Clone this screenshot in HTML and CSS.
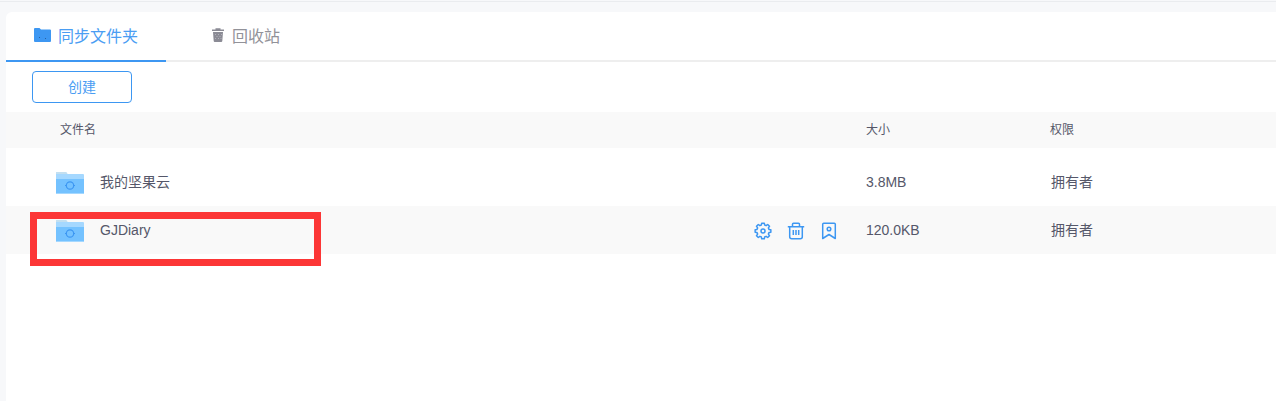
FILE: index.html
```html
<!DOCTYPE html>
<html lang="zh-CN">
<head>
<meta charset="utf-8">
<title>同步文件夹</title>
<link rel="stylesheet" href="styles.css">
</head>
<body>
<svg class="defs" aria-hidden="true">
  <symbol id="sync-folder" viewBox="0 0 28 22">
    <path d="M0 2V1Q0 0 1 0H10L11.500 2H27Q28 2 28 3V8H0Z" fill="#a5d8ff"/>
    <path d="M0 1Q0 0 1 0H10L11.500 2H0Z" fill="#c3dff0"/>
    <path d="M0 7H28V21Q28 22 27 22H1Q0 22 0 21Z" fill="#74c2ff"/>
    <path d="M0 21H28Q28 22 27 22H1Q0 22 0 21Z" fill="#a5d8ff"/>
    <circle cx="14" cy="13.500" r="3.700" fill="none" stroke="#3d97f2" stroke-width="1.200"/>
    <path d="M9 13.500h1.500M17.500 13.500h1.500" stroke="#3d97f2" stroke-width="1.200"/>
  </symbol>
</svg>
<main class="panel">
  <nav class="tabs">
    <a class="tab tab-active">
      <svg class="tab-folder" viewBox="0 0 17 14"><path d="M0 1Q0 0 1 0H5.500L7 1.500H16Q17 1.500 17 2.500V13Q17 14 16 14H1Q0 14 0 13Z" fill="#3d97f2"/><path d="M5 9h1v1H5zM11 10h1v1h-1z" fill="#2863a5"/></svg>
      <span>同步文件夹</span>
    </a>
    <a class="tab tab-trash">
      <svg class="tab-bin" viewBox="0 0 12 14"><path d="M0 1.500H3.500V.3H8.500V1.500H12V3H0ZM1 4H11L10.300 13Q10.200 14 9.300 14H2.700Q1.800 14 1.700 13Z" fill="#8b8b95"/><path d="M3 6h1v1H3zM6 6h1v1H6zM9 6h1v1H9zM4.500 8h1v1h-1zM7.500 8h1v1h-1zM3 10h1v1H3zM6 10h1v1H6zM8.500 10h1v1h-1z" fill="#b3b3bb"/></svg>
      <span>回收站</span>
    </a>
  </nav>
  <div class="toolbar"><button class="create">创建</button></div>
  <div class="row head"><span class="name">文件名</span><span class="size">大小</span><span class="role">权限</span></div>
  <div class="list">
    <div class="row file">
      <div class="name"><svg class="folder"><use href="#sync-folder"/></svg><span>我的坚果云</span></div>
      <span class="size">3.8MB</span><span class="role">拥有者</span>
    </div>
    <div class="row file selected">
      <div class="name"><svg class="folder"><use href="#sync-folder"/></svg><span>GJDiary</span>
        <div class="actions">
          <svg viewBox="-9 -9 18 18"><path d="M-1.600-6L-1.300-7.850H1.300L1.600-6 3.100-5.370 4.700-6.500 6.500-4.700 5.370-3.100 6-1.600 7.850-1.300V1.300L6 1.600 5.370 3.100 6.500 4.700 4.700 6.500 3.100 5.370 1.600 6 1.300 7.850H-1.300L-1.600 6-3.100 5.370-4.700 6.500-6.500 4.700-5.370 3.100-6 1.600-7.850 1.300V-1.300L-6-1.600-5.370-3.100-6.500-4.700-4.700-6.500-3.100-5.370Z"/><circle r="2"/></svg>
          <svg viewBox="0 0 18 18"><path d="M.8 4.700H17.200M5.500 4.500V2.300Q5.500 1.300 6.500 1.300H11.500Q12.500 1.300 12.500 2.300V4.500M2.700 5V14.700Q2.700 16.700 4.700 16.700H13.300Q15.300 16.700 15.300 14.700V5M6.300 8V13M9 8V13M11.700 8V13"/></svg>
          <svg viewBox="0 0 18 18"><path d="M2.700 16.500V2.200Q2.700 1.200 3.700 1.200H14.300Q15.300 1.200 15.300 2.200V16.500L9 12.500Z"/><circle cx="9" cy="7" r="1.800"/></svg>
        </div>
      </div>
      <span class="size">120.0KB</span><span class="role">拥有者</span>
    </div>
    <div class="highlight"></div>
  </div>
</main>
</body>
</html>
```
FILE: styles.css
```css
* { box-sizing: border-box; }
body {
  margin: 0;
  height: 401px;
  padding: 11px 0 0 6px;
  overflow: hidden;
  background: #f7f8fa;
  border-top: 1px solid #f7f8fa;
  box-shadow: inset 0 1px #eaecef;
  color: #555769;
  font-family: "Liberation Sans", "Noto Sans CJK SC", sans-serif;
  font-size: 14px;
}
.defs { position: absolute; width: 0; height: 0; }
.panel { height: 389px; background: #fff; border-top-left-radius: 6px; }
.tabs { display: flex; height: 50px; box-shadow: inset 0 -2px #eee; }
.tab {
  display: flex;
  align-items: center;
  height: 50px;
  width: 160px;
  font-size: 16px;
  line-height: 24px;
  color: #929299;
}
.tab span { padding-top: 2px; }
.tab-active { padding-left: 28px; color: #4a9df3; border-bottom: 2px solid #3d97f2; }
.tab-trash { padding: 0 0 2px 46px; }
.tab-folder { width: 17px; height: 14px; margin: 0 7px 2px 0; }
.tab-bin { width: 12px; height: 14px; margin: 0 8px 2px 0; }
.toolbar { height: 50px; padding: 9px 26px; }
.create {
  display: block;
  width: 100px;
  height: 32px;
  padding: 0;
  border: 1px solid #3d97f2;
  border-radius: 4px;
  background: #fff;
  color: #4a9df3;
  font: 14px/30px "Liberation Sans", "Noto Sans CJK SC", sans-serif;
}
.row { display: grid; grid-template-columns: 860px 184px 1fr; align-items: center; }
.head { height: 36px; background: #f9f9f9; font-size: 12px; line-height: 34px; }
.head .name { padding-left: 54px; }
.list { position: relative; padding-top: 10px; }
.file { height: 48px; line-height: 20px; }
.file .name { display: flex; align-items: center; padding-left: 50px; }
.folder { width: 28px; height: 22px; margin: 2px 16px 0 0; }
.file .role { padding-left: 1px; }
.selected { background: #f9f9f9; }
.actions { display: flex; gap: 15px; margin: 2px 28px 0 auto; }
.actions svg { width: 18px; height: 18px; fill: none; stroke: #3d97f2; stroke-width: 1.500; stroke-linejoin: round; }
.highlight {
  position: absolute;
  left: 24px;
  top: 64px;
  width: 291px;
  height: 54px;
  border: 7px solid #fc3636;
}
```
